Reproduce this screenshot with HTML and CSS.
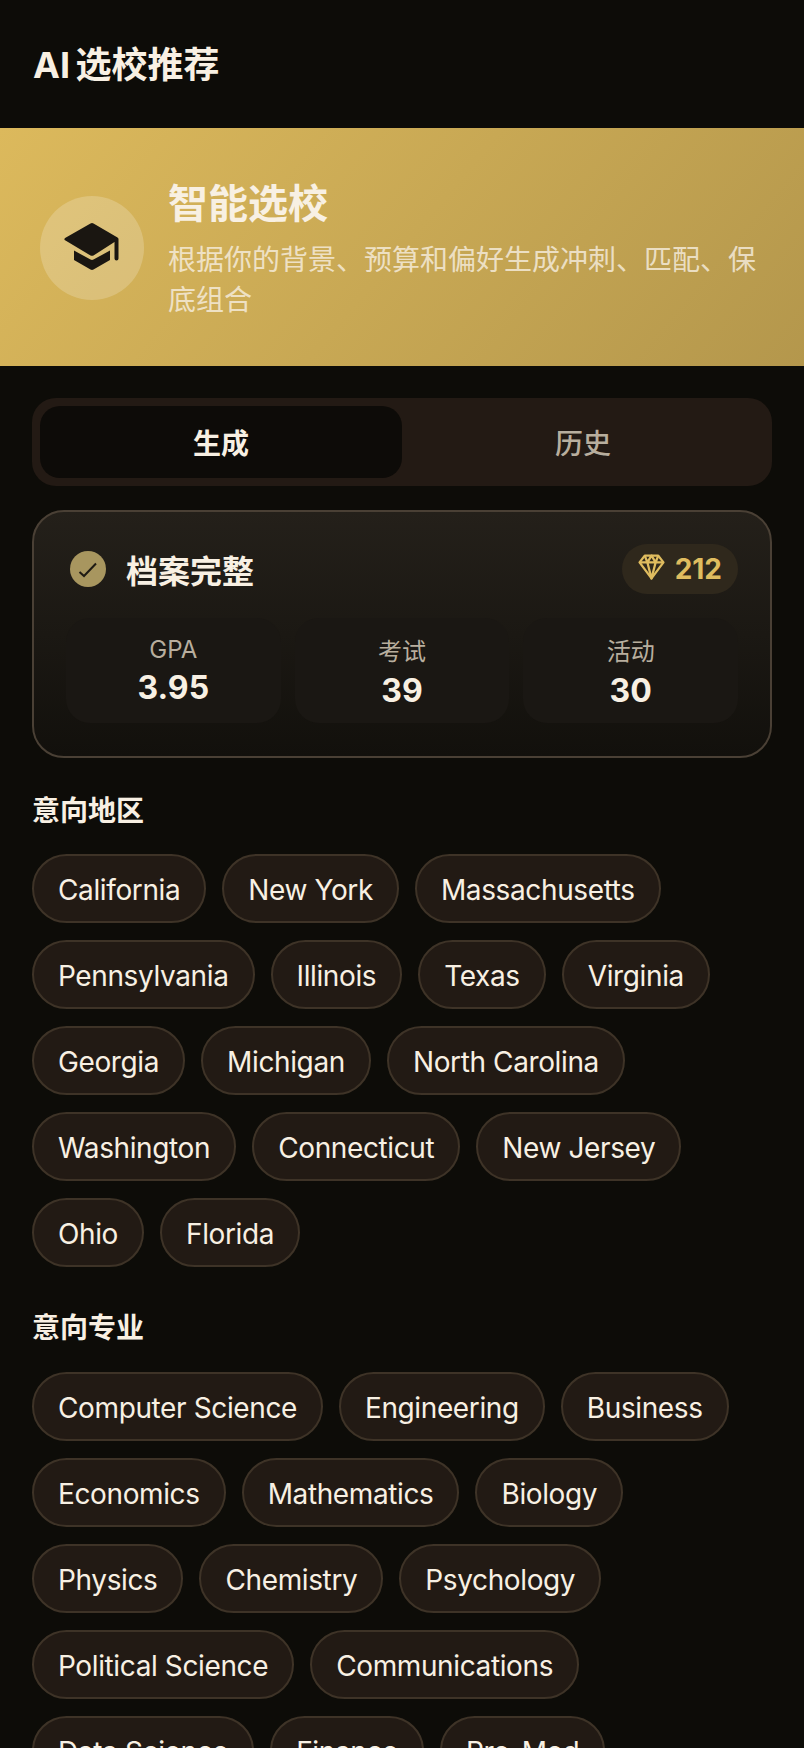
FILE: index.html
```html
<!DOCTYPE html>
<html lang="zh">
    <head>
        <title>AI 选校推荐</title>
        <meta name="viewport" content="width=device-width, initial-scale=1.0">
        <link rel="stylesheet" href="styles.css">
    </head>
    <body>
        <header class="topbar">
            <h1>AI 选校推荐</h1>
        </header>

        <section class="banner">
            <div class="banner-icon">
                <svg viewBox="0 0 60 60" width="60" height="60">
                    <path d="M3.500 19.800L28.500 5.400Q30 4.600 31.500 5.400L55.500 19.400Q56.500 20 56.500 21V40.500A2 2 0 0 1 52.500 40.500V24L31.500 37.400Q30 38.300 28.500 37.400L3.500 22.600Q1.200 21.200 3.500 19.800Z"/>
                    <path d="M12 32.500L28.500 41.600Q30 42.400 31.500 41.600L48 32.500V42L31.500 51.600Q30 52.400 28.500 51.600L12 42Z"/>
                </svg>
            </div>
            <div class="banner-text">
                <h2>智能选校</h2>
                <p>根据你的背景、预算和偏好生成冲刺、匹配、保底组合</p>
            </div>
        </section>

        <main class="content">
            <div class="tabs">
                <button class="tab active">生成</button>
                <button class="tab">历史</button>
            </div>

            <div class="profile">
                <div class="profile-head">
                    <span class="check">
                        <svg viewBox="0 0 24 24" width="24" height="24">
                            <path d="M3.500 15L8 19L20 6.500"/>
                        </svg>
                    </span>
                    <span class="profile-title">档案完整</span>
                    <span class="points">
                        <svg viewBox="0 0 26 25" width="27" height="26">
                            <path d="M6.500 1.500h13l5 6.500L13 23.500 1.500 8z"/>
                            <path d="M1.500 8h23M6.500 1.500L9 8l4-6.500L17 8l2.500-6.500M9 8l4 15.500L17 8"/>
                        </svg>
                        212
                    </span>
                </div>
                <div class="stats">
                    <div class="stat"><span class="stat-label">GPA</span><strong>3.95</strong></div>
                    <div class="stat"><span class="stat-label">考试</span><strong>39</strong></div>
                    <div class="stat"><span class="stat-label">活动</span><strong>30</strong></div>
                </div>
            </div>

            <h3 class="section-title">意向地区</h3>
            <div class="chips">
                <button class="chip">California</button>
                <button class="chip">New York</button>
                <button class="chip">Massachusetts</button>
                <button class="chip">Pennsylvania</button>
                <button class="chip">Illinois</button>
                <button class="chip">Texas</button>
                <button class="chip">Virginia</button>
                <button class="chip">Georgia</button>
                <button class="chip">Michigan</button>
                <button class="chip">North Carolina</button>
                <button class="chip">Washington</button>
                <button class="chip">Connecticut</button>
                <button class="chip">New Jersey</button>
                <button class="chip">Ohio</button>
                <button class="chip">Florida</button>
            </div>

            <h3 class="section-title">意向专业</h3>
            <div class="chips">
                <button class="chip">Computer Science</button>
                <button class="chip">Engineering</button>
                <button class="chip">Business</button>
                <button class="chip">Economics</button>
                <button class="chip">Mathematics</button>
                <button class="chip">Biology</button>
                <button class="chip">Physics</button>
                <button class="chip">Chemistry</button>
                <button class="chip">Psychology</button>
                <button class="chip">Political Science</button>
                <button class="chip">Communications</button>
                <button class="chip">Data Science</button>
                <button class="chip">Finance</button>
                <button class="chip">Pre-Med</button>
            </div>
        </main>
    </body>
</html>
```

FILE: styles.css
```css
* {
    box-sizing: border-box;
}

html, body {
    height: 1748px;
    overflow: hidden;
}

body {
    margin: 0;
    background-color: #0d0c08;
    color: #f8f0e3;
    font-family: Inter, "Noto Sans CJK SC", sans-serif;
}

h1, h2, h3, p {
    margin: 0;
}

button {
    font-family: inherit;
    color: inherit;
    cursor: pointer;
}

.topbar {
    height: 128px;
    padding: 0 0 4px 33px;
    display: flex;
    align-items: center;
}

.topbar h1 {
    font-size: 36px;
    font-weight: 700;
    word-spacing: -3px;
}

.banner {
    height: 238px;
    padding: 2px 48px 0 40px;
    display: flex;
    align-items: center;
    gap: 24px;
    background-image: linear-gradient(130deg, #dcb95c, #b4974c);
}

.banner-icon {
    width: 104px;
    height: 104px;
    flex-shrink: 0;
    border-radius: 50%;
    background-color: rgba(255, 255, 255, 0.2);
    display: flex;
    align-items: center;
    justify-content: center;
}

.banner-icon svg {
    fill: #1a1611;
}

.banner-text h2 {
    font-size: 40px;
    font-weight: 700;
    line-height: 56px;
    color: #f8f0e3;
}

.banner-text p {
    margin-top: 8px;
    font-size: 28px;
    line-height: 40px;
    color: rgba(248, 240, 227, 0.8);
}

.content {
    padding: 32px 32px 0;
}

.tabs {
    height: 88px;
    padding: 8px;
    display: flex;
    border-radius: 24px;
    background-color: #231a14;
}

.tab {
    flex: 1;
    border: none;
    border-radius: 20px;
    background: none;
    font-size: 28px;
    font-weight: 500;
    color: #b8ae9e;
}

.tab.active {
    background-color: #0d0b08;
    color: #f8f0e3;
    font-weight: 600;
}

.profile {
    height: 248px;
    margin-top: 24px;
    padding: 32px 32px 0;
    border: 2px solid #4a4035;
    border-radius: 32px;
    background-image: linear-gradient(to bottom, #24201a, #12100c);
}

.profile-head {
    height: 50px;
    display: flex;
    align-items: center;
    padding-left: 4px;
}

.check {
    width: 36px;
    height: 36px;
    border-radius: 50%;
    background-color: #a8965f;
    display: flex;
    align-items: center;
    justify-content: center;
}

.check svg {
    fill: none;
    stroke: #1f1b14;
    stroke-width: 2;
}

.profile-title {
    margin-left: 20px;
    font-size: 32px;
    font-weight: 700;
}

.points {
    margin-left: auto;
    height: 50px;
    padding: 0 16px;
    display: flex;
    align-items: center;
    gap: 10px;
    border-radius: 25px;
    background-color: #2f281c;
    color: #dfbc5f;
    font-size: 28px;
    font-weight: 700;
}

.points svg {
    margin-bottom: 4px;
    fill: none;
    stroke: #dfbc5f;
    stroke-width: 2.2;
    stroke-linejoin: round;
}

.stats {
    margin-top: 24px;
    display: grid;
    grid-template-columns: repeat(3, 1fr);
    gap: 14px;
}

.stat {
    height: 105px;
    padding-top: 1px;
    display: flex;
    flex-direction: column;
    align-items: center;
    justify-content: center;
    gap: 4px;
    border-radius: 24px;
    background-color: #1a1713;
}

.stat-label {
    font-size: 24px;
    color: #b8ae9e;
}

.stat strong {
    font-size: 32px;
    line-height: 40px;
    font-weight: 700;
}

.section-title {
    margin-top: 33px;
    font-size: 28px;
    line-height: 40px;
    font-weight: 700;
}

.chips {
    margin-top: 23px;
    display: flex;
    flex-wrap: wrap;
    gap: 17px 16px;
}

.chips + .section-title {
    margin-top: 41px;
}

.chips + .section-title + .chips {
    margin-top: 24px;
}

.chip {
    height: 69px;
    padding: 2px 24px 0;
    border: 2px solid #3e3327;
    border-radius: 35px;
    background-color: #221a14;
    font-size: 28px;
    font-weight: 400;
    letter-spacing: -0.38px;
    color: #f8f0e3;
}
```
